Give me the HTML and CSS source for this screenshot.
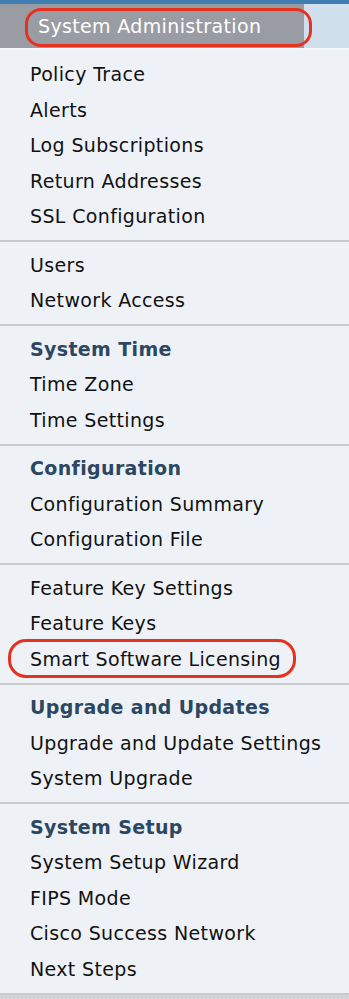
FILE: index.html
```html
<!DOCTYPE html>
<html lang="en">

<head>
    <meta charset="UTF-8">
    <meta name="viewport" content="width=device-width, initial-scale=1.0">
    <title>System Administration</title>
    <link rel="stylesheet" href="styles.css">
</head>

<body>

    <div class="topstrip"></div>
    <div class="tabbar">
        <div class="tab">
            <span class="tab-label">System Administration</span>
            <span class="ring ring-tab"></span>
        </div>
        <div class="tab-rest"></div>
    </div>

    <div class="menu">
        <ul class="group first">
            <li>Policy Trace</li>
            <li>Alerts</li>
            <li>Log Subscriptions</li>
            <li>Return Addresses</li>
            <li>SSL Configuration</li>
        </ul>
        <ul class="group">
            <li>Users</li>
            <li>Network Access</li>
        </ul>
        <ul class="group">
            <li class="heading">System Time</li>
            <li>Time Zone</li>
            <li>Time Settings</li>
        </ul>
        <ul class="group">
            <li class="heading">Configuration</li>
            <li>Configuration Summary</li>
            <li>Configuration File</li>
        </ul>
        <ul class="group">
            <li>Feature Key Settings</li>
            <li>Feature Keys</li>
            <li class="marked">Smart Software Licensing<span class="ring ring-item"></span></li>
        </ul>
        <ul class="group">
            <li class="heading">Upgrade and Updates</li>
            <li>Upgrade and Update Settings</li>
            <li>System Upgrade</li>
        </ul>
        <ul class="group">
            <li class="heading">System Setup</li>
            <li>System Setup Wizard</li>
            <li>FIPS Mode</li>
            <li>Cisco Success Network</li>
            <li>Next Steps</li>
        </ul>
    </div>

    <div class="footer"></div>

</body>

</html>
```

FILE: styles.css
```css
body {
    margin: 0;
    padding: 0;
    font-family: "DejaVu Sans", Verdana, sans-serif;
    font-size: 19px;
    letter-spacing: 0.35px;
    background-color: #eef2f7;
    color: #111;
}

.topstrip {
    height: 4px;
    background-color: #3f7db3;
}

.tabbar {
    display: flex;
    height: 44px;
    border-bottom: 2px solid #f6f7f8;
}

.tab {
    position: relative;
    width: 304px;
    background-color: #9a9ca4;
    display: flex;
    align-items: center;
}

.tab-label {
    color: #fff;
    padding-left: 38px;
}

.tab-rest {
    flex: 1;
    background-color: #cfdfec;
}

/* red annotation rings */
.ring {
    position: absolute;
    border: 3px solid #e4321f;
    pointer-events: none;
}

.ring-tab {
    left: 25px;
    right: -8px;
    top: 4px;
    bottom: 1px;
    border-radius: 16px;
}

.marked {
    position: relative;
}

.ring-item {
    left: -22px;
    width: 282px;
    top: -3px;
    height: 33px;
    border-radius: 18px;
}

.menu {
    display: flex;
    flex-direction: column;
}

.group {
    list-style: none;
    margin: 0;
    padding: 5.5px 0 5.5px 30px;
    border-bottom: 2px solid #c8c9cb;
}

.group.first {
    padding-top: 7px;
}

.group li {
    line-height: 35.5px;
    white-space: nowrap;
}

.group .heading {
    font-weight: bold;
    color: #2c4761;
}

.footer {
    height: 12px;
    background-color: #d6d6d6;
    background-image: radial-gradient(#cbcbcb 1px, transparent 1px);
    background-size: 4px 4px;
}
```
